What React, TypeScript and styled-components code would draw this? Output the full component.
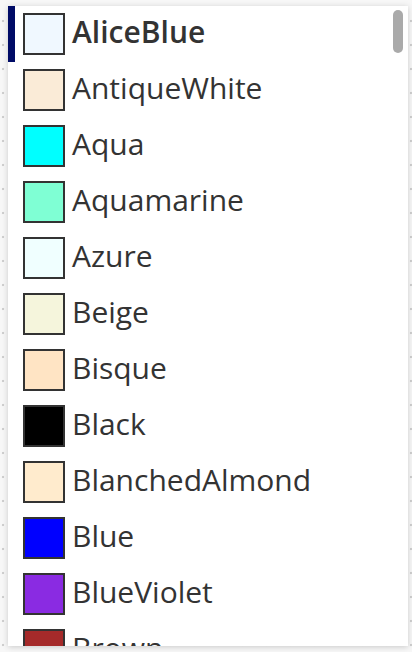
import React from "react";
import styled, { createGlobalStyle } from "styled-components";

const GlobalStyle = createGlobalStyle`
  html, body {
    margin: 0;
    padding: 0;
    background-color: #f7f7f7;
    background-image: radial-gradient(circle, #cfcfcf 1px, transparent 1.6px);
    background-size: 24px 24px;
    background-position: -9px 9px;
    font-family: "Open Sans", "Noto Sans", sans-serif;
  }
`;

const Page = styled.div`
  width: 412px;
  height: 652px;
  box-sizing: border-box;
  padding: 6px 4px 6px 8px;
  display: flex;
`;

const Panel = styled.div`
  position: relative;
  flex: 1;
  background: #ffffff;
  box-shadow: 0 1px 6px rgba(0, 0, 0, 0.18);
  overflow: hidden;
`;

const List = styled.ul`
  list-style: none;
  margin: 0;
  padding: 0;
  display: flex;
  flex-direction: column;
`;

const Row = styled.li<{ $selected?: boolean }>`
  height: 56px;
  flex: 0 0 56px;
  display: flex;
  align-items: center;
  padding-left: 8px;
  box-sizing: border-box;
  border-left: 7px solid ${(p) => (p.$selected ? "#000b66" : "transparent")};
`;

const Swatch = styled.span<{ $color: string }>`
  width: 42px;
  height: 42px;
  box-sizing: border-box;
  border: 2px solid #333333;
  background: ${(p) => p.$color};
  flex: 0 0 auto;
`;

const Label = styled.span<{ $selected?: boolean }>`
  font-family: "Open Sans", "Noto Sans", sans-serif;
  font-size: 30px;
  line-height: 1;
  margin-left: 7px;
  margin-top: -4px;
  color: #333333;
  font-weight: ${(p) => (p.$selected ? 600 : 400)};
  white-space: nowrap;
`;

const Thumb = styled.div`
  position: absolute;
  top: 4px;
  right: 5px;
  width: 10px;
  height: 43px;
  border-radius: 5px;
  background: #aaaaaa;
`;

const colors: [string, string][] = [
  ["AliceBlue", "#F0F8FF"],
  ["AntiqueWhite", "#FAEBD7"],
  ["Aqua", "#00FFFF"],
  ["Aquamarine", "#7FFFD4"],
  ["Azure", "#F0FFFF"],
  ["Beige", "#F5F5DC"],
  ["Bisque", "#FFE4C4"],
  ["Black", "#000000"],
  ["BlanchedAlmond", "#FFEBCD"],
  ["Blue", "#0000FF"],
  ["BlueViolet", "#8A2BE2"],
  ["Brown", "#A52A2A"],
  ["BurlyWood", "#DEB887"],
];

export default function App() {
  return (
    <>
      <GlobalStyle />
      <Page>
        <Panel>
          <List>
            {colors.map(([name, hex], i) => (
              <Row key={name} $selected={i === 0}>
                <Swatch $color={hex} />
                <Label $selected={i === 0}>{name}</Label>
              </Row>
            ))}
          </List>
          <Thumb />
        </Panel>
      </Page>
    </>
  );
}
